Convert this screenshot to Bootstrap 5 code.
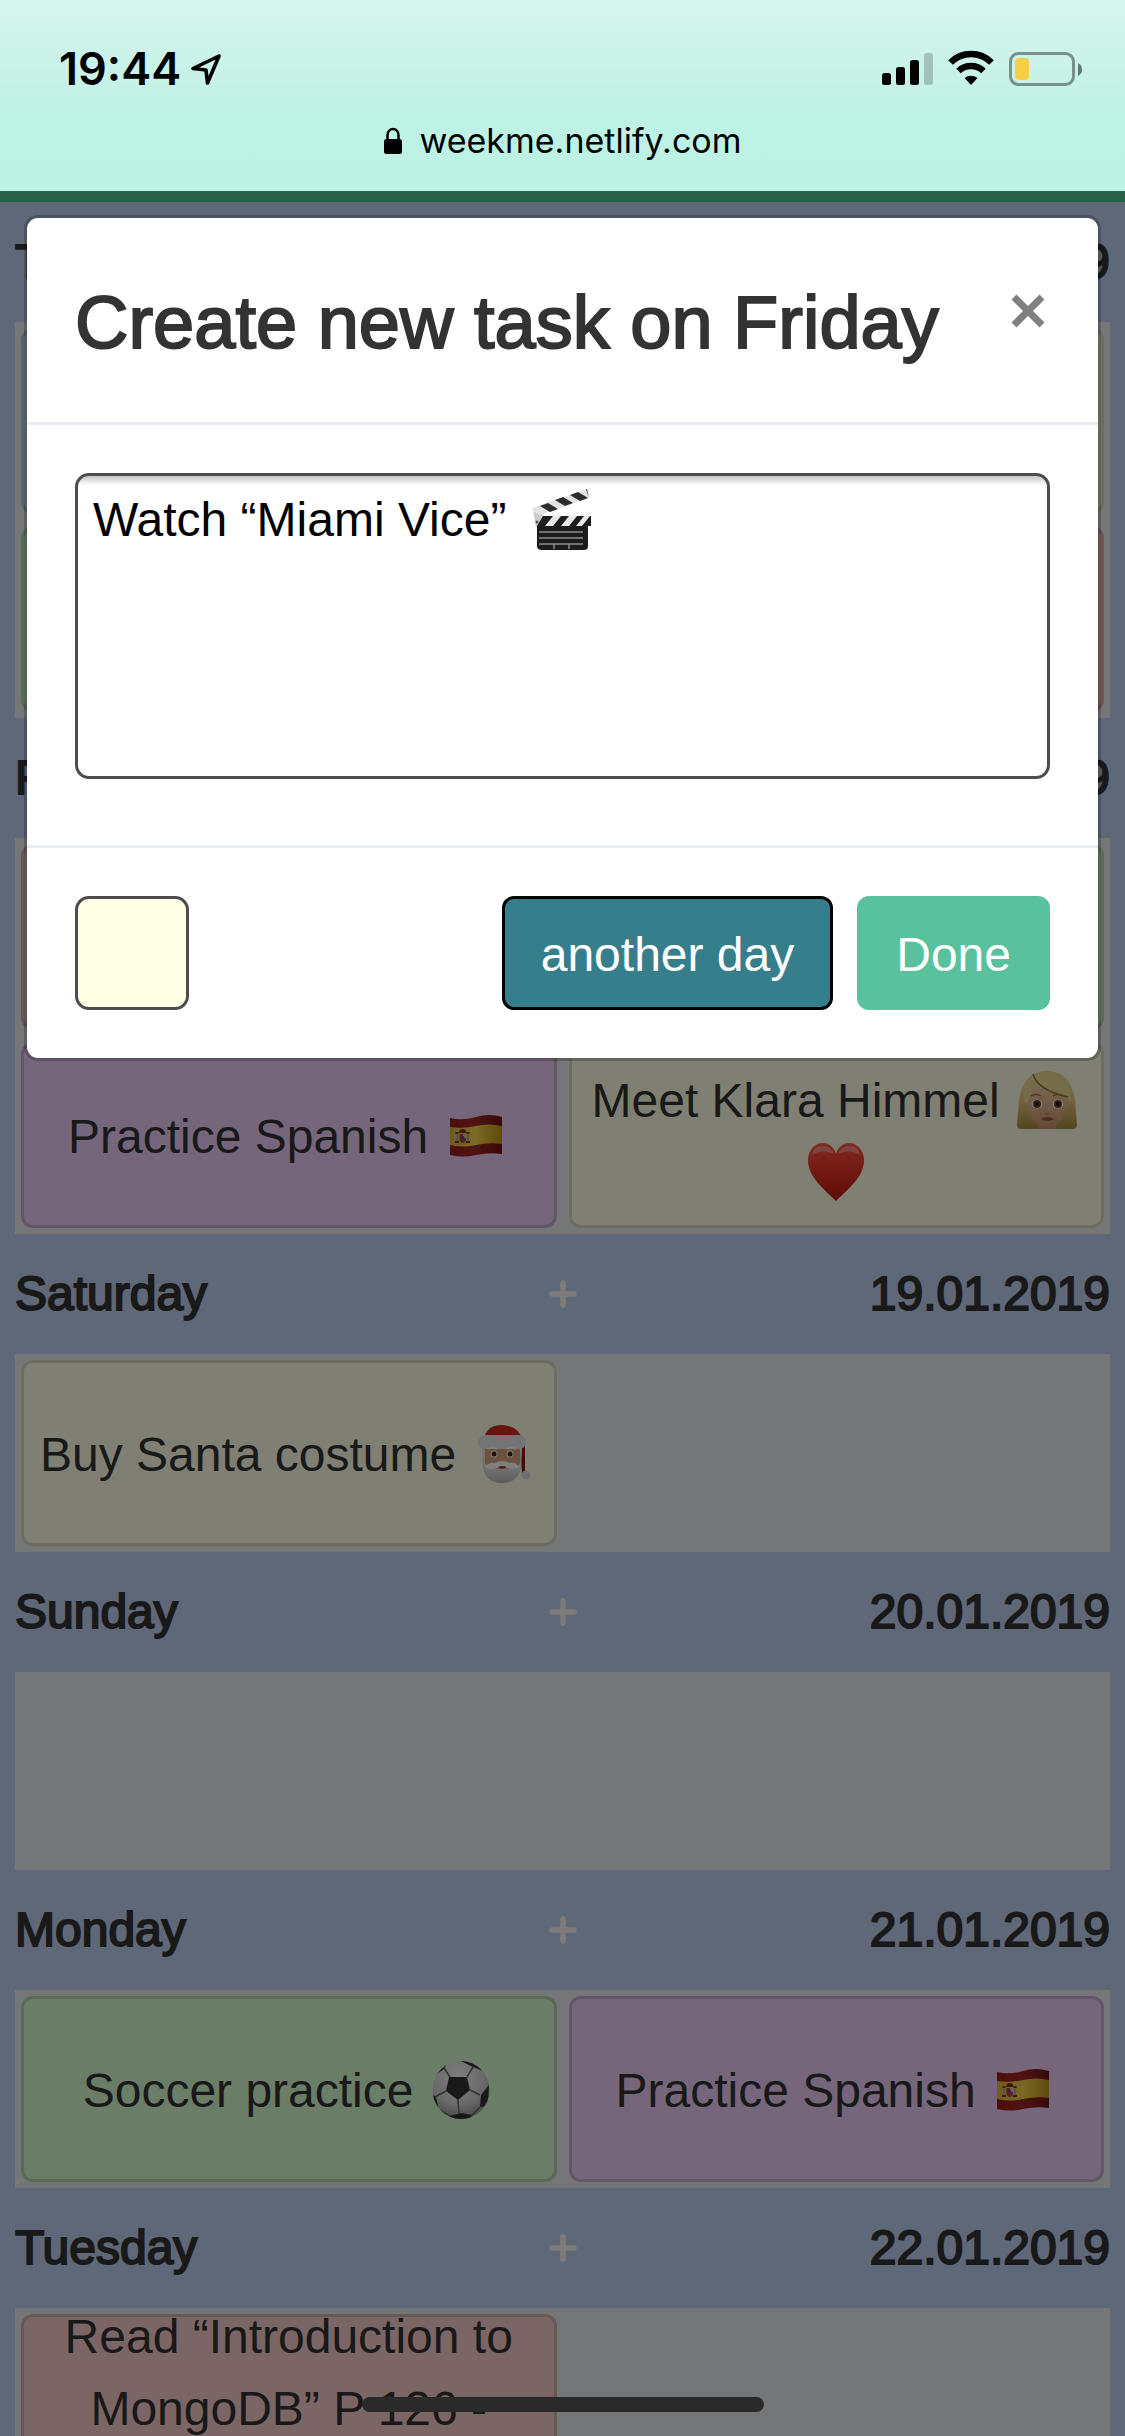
<!DOCTYPE html>
<html lang="en">
<head>
<meta charset="utf-8">
<meta name="viewport" content="width=device-width, initial-scale=1">
<title>weekme</title>
<link href="https://cdn.jsdelivr.net/npm/bootstrap@5.3.0/dist/css/bootstrap.min.css" rel="stylesheet">
<style>
  body { font-family: "Liberation Sans", Arial, sans-serif; font-size: 48px; line-height: 72px; color: #333; background: #bed0f0; }
  .top-chrome { height: 191px; background: linear-gradient(#d7f5ed 0, #c8f2e8 72px, #bef2e5 120px, #bcf1e4 100%); font-family: Inter, sans-serif; color: #000; }
  .status-line { height: 100px; padding: 38px 43px 0 59px; }
  .clock-text { font-size: 45px; font-weight: 600; line-height: 62px; }
  .address-line { font-size: 34px; line-height: 48px; padding-top: 17px; }
  .app-nav { height: 11px; background: #53be96; }
  .day-head { height: 120px; padding: 0 15px; display: grid; grid-template-columns: 1fr auto 1fr; align-items: center; }
  .day-head h2, .day-head time { font-size: 48px; font-weight: 500; line-height: 72px; margin: 0; -webkit-text-stroke: 2px #333; }
  .day-head button { border: 0; background: none; padding: 0; display: flex; }
  .task-row { margin: 0 15px; background: #eaecf0; min-height: 198px; }
  .task-card { height: 186px; margin: 6px; padding-top: 4px; border: 3px solid rgba(0, 0, 0, .15); border-radius: 12px; background-clip: border-box; }
  .tint-yellow { background-color: #ffffe6; }
  .tint-purple { background-color: #eaccf8; }
  .tint-green { background-color: #d5face; }
  .tint-red { background-color: #f8cccb; }
  .tint-blue { background-color: #cbeaf6; }
  .emo { width: 68px; height: 60px; vertical-align: -13px; }
  .dimmer { background: rgba(0, 0, 0, .5); }
  .task-modal { overflow: hidden; }
  .task-modal .modal-dialog { margin: 24px; max-width: none; }
  .task-modal .modal-content { border: 3px solid rgba(0, 0, 0, .2); border-radius: 14px; color: #333; }
  .task-modal .modal-header { padding: 51px 48px 45px; border-bottom: 3px solid #e9ecef; }
  .task-modal .modal-title { font-size: 74px; line-height: 108px; font-weight: 500; -webkit-text-stroke: 2px #333; }
  .task-modal .modal-body { padding: 48px 48px 66px; }
  .task-modal .modal-footer { padding: 48px; border-top: 3px solid #e9ecef; }
  .close-x { border: 0; background: none; padding: 0; display: flex; margin: 23px 4px 0 0; }
  .task-text { display: block; width: 100%; height: 306px; resize: none; border: 3px solid #4d4d4d; border-radius: 14px; padding: 8px 15px; color: #000; line-height: 72px; background: #fff linear-gradient(#c4c4c4, #fff) no-repeat 0 0 / 100% 9px; outline: 0; }
  .task-emoji { left: 454px; top: 15px; width: 64px; height: 64px; }
  .swatch { width: 114px; height: 114px; border: 3px solid #4d4d4d; border-radius: 14px; }
  .btn-task { font-size: 48px; line-height: 72px; padding: 20px 36px 16px; border-width: 3px; border-radius: 12px; color: #fff; }
  .btn-move { background: #377e8c; border-color: #000; }
  .btn-done { background: #5ac19e; border-color: #5ac19e; }
  .home-bar { left: 50%; bottom: 24px; width: 402px; height: 15px; margin-left: -201px; border-radius: 8px; background: #2a2a2a; z-index: 1090; }
</style>
<script src="https://cdn.jsdelivr.net/npm/bootstrap@5.3.0/dist/js/bootstrap.bundle.min.js"></script>
</head>
<body class="vh-100 d-flex flex-column overflow-hidden position-relative">

<svg width="0" height="0" class="position-absolute" aria-hidden="true">
  <defs>
    <linearGradient id="gHeart" x1="0" y1="0" x2="0" y2="1"><stop offset="0" stop-color="#ff5a4c"/><stop offset=".35" stop-color="#ee3a2c"/><stop offset="1" stop-color="#c0170c"/></linearGradient>
    <linearGradient id="gGold" x1="0" y1="0" x2="1" y2="0"><stop offset="0" stop-color="#e0b838"/><stop offset=".5" stop-color="#f4d448"/><stop offset="1" stop-color="#c09418"/></linearGradient>
    <linearGradient id="gRed" x1="0" y1="0" x2="1" y2="0"><stop offset="0" stop-color="#981c1a"/><stop offset=".45" stop-color="#a42826"/><stop offset="1" stop-color="#701010"/></linearGradient>
    <linearGradient id="gHair" x1="0" y1="0" x2="0" y2="1"><stop offset="0" stop-color="#f8e8b0"/><stop offset=".5" stop-color="#e0c67a"/><stop offset="1" stop-color="#a88c42"/></linearGradient>
    <linearGradient id="gFace" x1="0" y1="0" x2="0" y2="1"><stop offset="0" stop-color="#f2cfa4"/><stop offset="1" stop-color="#cc9870"/></linearGradient>
    <radialGradient id="gBall" cx=".45" cy=".3" r=".75"><stop offset="0" stop-color="#fff"/><stop offset=".6" stop-color="#d4d4d4"/><stop offset="1" stop-color="#888"/></radialGradient>
    <linearGradient id="gBeard" x1="0" y1="0" x2="0" y2="1"><stop offset="0" stop-color="#f4f4f4"/><stop offset="1" stop-color="#b8b8b8"/></linearGradient>
    <clipPath id="cBall"><ellipse cx="34" cy="30" rx="28.500" ry="29"/></clipPath>

    <symbol id="flag-es" viewBox="0 0 68 60">
      <path d="M8 12q13 3 26-1t26 0v37q-13-2-26 1t-26 0z" fill="url(#gRed)"/>
      <path d="M8 21q13 2 26-1t26 0v18q-13-2-26 1t-26 0z" fill="url(#gGold)"/>
      <path d="M14 28h2v8h-2zM25 28h2v8h-2z" fill="#b8a890"/><path d="M13 35h4v2h-4zM24 35h4v2h-4zM13.500 26h3v2h-3zM24.500 26h3v2h-3z" fill="#7a3a2a"/>
      <path d="M17.500 28h6.500v7q-3 4-6.500 0z" fill="#a8483c"/><path d="M21 28h3v4h-3z" fill="#d8b8c8"/><path d="M17 27q0-4 3.700-4t3.700 4z" fill="#8a2c1c"/><circle cx="20.700" cy="31.500" r="1.400" fill="#6a3c8c"/>
    </symbol>
    <symbol id="heart" viewBox="0 0 68 60">
      <path d="M34 59C22 47 6 35 6 18 6 8 13 1 21 1c6 0 11 4 13 11C36 5 41 1 47 1c8 0 15 7 15 17 0 17-16 29-28 41z" fill="url(#gHeart)"/>
      <path d="M10 13q2-9 11-9 8 0 11 8-11-6-22 1zM36 12q3-8 11-8 9 0 11 9-11-7-22-1z" fill="#fff" opacity=".35"/>
    </symbol>
    <symbol id="blonde" viewBox="0 0 68 60">
      <path d="M34 1C17 1 9 12 6 30L4 55q0 4 5 4h50q5 0 5-4l-2-25C59 12 51 1 34 1z" fill="url(#gHair)"/>
      <path d="M25 50h18v9H25z" fill="#c8906a"/>
      <path d="M14 33C14 22 22 14 34 15c12-1 20 7 20 19 0 14-10 23-20 23s-20-10-20-24z" fill="url(#gFace)"/>
      <path d="M19 5q-5 6 1 10-1 10-8 19-3-20 7-29zM20 5q8 16 34 21l4 7Q59 2 34 1q-8 0-14 4z" fill="#ecd892"/>
      <path d="M20 4q4 16 35 23" fill="none" stroke="#927837" stroke-width="1.500"/>
      <ellipse cx="24" cy="34" rx="5.500" ry="4.500" fill="#fff"/><ellipse cx="45" cy="34" rx="5.500" ry="4.500" fill="#fff"/>
      <circle cx="24" cy="34" r="4" fill="#70451c"/><circle cx="45" cy="34" r="4" fill="#70451c"/><circle cx="24" cy="34" r="2" fill="#111"/><circle cx="45" cy="34" r="2" fill="#111"/>
      <path d="M18 26q5-3 10 0M40 26q5-3 10 0" fill="none" stroke="#a07c3c" stroke-width="1.500"/>
      <path d="M32 43q2 2 5 0" fill="none" stroke="#b07850" stroke-width="1.500"/><path d="M28 49q7-4 13 0-7 4-13 0z" fill="#aa4e48"/>
    </symbol>
    <symbol id="santa" viewBox="0 0 68 60">
      <path d="M50 20h5v29h-3z" fill="#8c1414"/><circle cx="56" cy="51" r="4.500" fill="#ddd"/>
      <path d="M12 22q0 16 2 25 4 12 18 12t18-12q2-9 2-25z" fill="url(#gBeard)"/>
      <path d="M15 20h35v22q-3 4-17 4t-18-4z" fill="#d9a47a"/>
      <path d="M14 17Q15 1 32 1q18 1 21 17z" fill="#d12a20"/>
      <rect x="8" y="11" width="48" height="14" rx="7" fill="#e8e8e8"/>
      <path d="M14 38q5 8 18 7 14 1 19-7 0 20-19 21-18-1-18-21z" fill="url(#gBeard)"/>
      <path d="M15 43q4-5 10-4 7-4 15 0 6-1 9 4-8 4-13 0-3-2-7 0-7 4-14 0z" fill="#fff"/>
      <circle cx="24" cy="30" r="3.500" fill="#fff"/><circle cx="40" cy="30" r="3.500" fill="#fff"/><circle cx="24" cy="30" r="2.500" fill="#3a1d0c"/><circle cx="40" cy="30" r="2.500" fill="#3a1d0c"/>
      <path d="M18 25q5-3 9 0M37 25q5-3 9 0" stroke="#fff" stroke-width="2" fill="none"/><path d="M28 43q4-2 8 0-4 3-8 0z" fill="#8a3e2e"/>
    </symbol>
    <symbol id="soccer" viewBox="0 0 68 60">
      <ellipse cx="34" cy="30" rx="28.500" ry="29" fill="url(#gBall)"/>
      <g clip-path="url(#cBall)" fill="#333">
        <path d="M22 17h18l3 13-12 10-12-9zM30-1l14 1 12 11-10-4zM62 25l-8 10-1 12 8-1zM22 56l12-3 11 2-3 7H24zM4 34l5 3 3 14-7-5zM7 16l10-7 4-7-9 3z"/>
        <path d="M23 17l-6-9M40 17l6-10M43 30l10 5M31 40l1 14M19 31L8 37M53 47l-9 9M12 50l11 6M22 2l10-3" stroke="#666" stroke-width="1.500"/>
      </g>
    </symbol>
    <symbol id="clapper" viewBox="0 0 64 64">
      <path d="M4 21l3-1 17 17-17 2z" fill="#ccc"/><circle cx="8" cy="34" r="1.500" fill="#555"/><circle cx="17" cy="34" r="1.500" fill="#555"/>
      <path d="M3 20L58 1l2 9L11 27q-6-2-8-7z" fill="#e2e2e2"/>
      <path d="M11 18l8-3 10 6-8 3zM26 12l8-3 10 6-8 3zM41 7l8-3 10 6-8 3zM57 1h1l2 9z" fill="#2c2c2c"/>
      <path d="M14 28h48v10H8z" fill="#1d1d1d"/>
      <path d="M24 28h8l-8 10h-8zM40 28h8l-8 10h-8zM55 28h6l-8 10h-6z" fill="#e8ece8"/>
      <path d="M8 38h51v20q0 4-4 4H13q-5 0-5-4z" fill="#1c1c1c"/>
      <path d="M10 44h44M10 50h44M10 56h44M25 56v5M40 56v5" stroke="#8c8c8c" stroke-width="1.500"/>
    </symbol>
    <symbol id="plus" viewBox="0 0 28 28"><path d="M14 3v22M3 14h22" stroke="#fbf8f3" stroke-width="5.500" stroke-linecap="round"/></symbol>
  </defs>
</svg>

<header class="top-chrome flex-shrink-0">
  <div class="status-line d-flex justify-content-between align-items-start">
    <div class="d-flex align-items-center gap-2">
      <span class="clock-text">19:44</span>
      <svg width="34" height="34" viewBox="0 0 34 34" aria-label="Location"><path d="M30 4L4 16.500 17 18l1.500 13z" fill="none" stroke="#000" stroke-width="3.600" stroke-linejoin="round"/></svg>
    </div>
    <svg width="202" height="42" viewBox="0 -3 202 42" class="mt-2" aria-label="Signal, Wi-Fi, battery">
      <rect x="2" y="24" width="9" height="12" rx="2.500"/><rect x="16" y="18" width="9" height="18" rx="2.500"/><rect x="30" y="11" width="9" height="25" rx="2.500"/><rect x="44" y="4" width="9" height="32" rx="2.500" opacity=".2"/>
      <path d="M70.500 13.500a29 29 0 0 1 41 0" fill="none" stroke="#000" stroke-width="6.500"/>
      <path d="M78.500 22a18 18 0 0 1 25 0" fill="none" stroke="#000" stroke-width="6.500"/>
      <path d="M84.500 29a10 9 0 0 1 13 0L91 36z"/>
      <rect x="130.500" y="4.500" width="63" height="31" rx="8" fill="none" stroke="#000" stroke-opacity=".4" stroke-width="3"/>
      <rect x="135" y="9" width="14" height="22" rx="4" fill="#f7ce46"/>
      <path d="M198 14q4 2 4 6.500t-4 6.500z" opacity=".5"/>
    </svg>
  </div>
  <div class="address-line d-flex justify-content-center align-items-center">
    <svg width="20" height="28" viewBox="0 0 20 28" class="me-3" aria-label="Secure"><rect x="1" y="12" width="18" height="15" rx="2.500"/><path d="M4.500 13V8a5.500 6 0 0 1 11 0v5" fill="none" stroke="#000" stroke-width="2.500"/></svg>
    <span>weekme.netlify.com</span>
  </div>
</header>

<div class="position-relative flex-grow-1 overflow-hidden">
  <nav class="app-nav"></nav>
  <main>
    <section>
      <div class="day-head"><h2>Thursday</h2><button type="button" aria-label="Add task on Thursday"><svg width="28" height="28"><use href="#plus"/></svg></button><time class="text-end">17.01.2019</time></div>
      <div class="task-row row g-0">
        <div class="col-6"><div class="task-card tint-blue"></div></div><div class="col-6"><div class="task-card tint-yellow"></div></div>
        <div class="col-6"><div class="task-card tint-green"></div></div><div class="col-6"><div class="task-card tint-red"></div></div>
      </div>
    </section>
    <section>
      <div class="day-head"><h2>Friday</h2><button type="button" aria-label="Add task on Friday"><svg width="28" height="28"><use href="#plus"/></svg></button><time class="text-end">18.01.2019</time></div>
      <div class="task-row row g-0">
        <div class="col-6"><div class="task-card tint-red"></div></div><div class="col-6"><div class="task-card tint-green"></div></div>
        <div class="col-6"><div class="task-card tint-purple d-flex align-items-center justify-content-center text-center"><div>Practice Spanish <svg class="emo" role="img" aria-label="Flag of Spain"><use href="#flag-es"/></svg></div></div></div>
        <div class="col-6"><div class="task-card tint-yellow d-flex align-items-center justify-content-center text-center"><div>Meet Klara Himmel <svg class="emo" role="img" aria-label="Woman"><use href="#blonde"/></svg><br><svg class="emo" role="img" aria-label="Heart"><use href="#heart"/></svg></div></div></div>
      </div>
    </section>
    <section>
      <div class="day-head"><h2>Saturday</h2><button type="button" aria-label="Add task on Saturday"><svg width="28" height="28"><use href="#plus"/></svg></button><time class="text-end">19.01.2019</time></div>
      <div class="task-row row g-0">
        <div class="col-6"><div class="task-card tint-yellow d-flex align-items-center justify-content-center text-center"><div>Buy Santa costume <svg class="emo" role="img" aria-label="Santa"><use href="#santa"/></svg></div></div></div>
      </div>
    </section>
    <section>
      <div class="day-head"><h2>Sunday</h2><button type="button" aria-label="Add task on Sunday"><svg width="28" height="28"><use href="#plus"/></svg></button><time class="text-end">20.01.2019</time></div>
      <div class="task-row row g-0"></div>
    </section>
    <section>
      <div class="day-head"><h2>Monday</h2><button type="button" aria-label="Add task on Monday"><svg width="28" height="28"><use href="#plus"/></svg></button><time class="text-end">21.01.2019</time></div>
      <div class="task-row row g-0">
        <div class="col-6"><div class="task-card tint-green d-flex align-items-center justify-content-center text-center"><div>Soccer practice <svg class="emo" role="img" aria-label="Soccer ball"><use href="#soccer"/></svg></div></div></div>
        <div class="col-6"><div class="task-card tint-purple d-flex align-items-center justify-content-center text-center"><div>Practice Spanish <svg class="emo" role="img" aria-label="Flag of Spain"><use href="#flag-es"/></svg></div></div></div>
      </div>
    </section>
    <section>
      <div class="day-head"><h2>Tuesday</h2><button type="button" aria-label="Add task on Tuesday"><svg width="28" height="28"><use href="#plus"/></svg></button><time class="text-end">22.01.2019</time></div>
      <div class="task-row row g-0">
        <div class="col-6"><div class="task-card tint-red d-flex align-items-center justify-content-center text-center"><div>Read “Introduction to<br>MongoDB” P 126 -<br><br></div></div></div>
      </div>
    </section>
  </main>

  <div class="dimmer position-absolute top-0 start-0 w-100 h-100"></div>
  <div class="modal task-modal d-block position-absolute" tabindex="-1" role="dialog" aria-labelledby="taskTitle">
    <div class="modal-dialog">
      <form class="modal-content">
        <div class="modal-header align-items-start">
          <h1 class="modal-title" id="taskTitle">Create new task on Friday</h1>
          <button type="button" class="close-x" aria-label="Close"><svg width="36" height="38" viewBox="0 0 36 38"><path d="M4 5l28 28M32 5L4 33" stroke="#808080" stroke-width="7"/></svg></button>
        </div>
        <div class="modal-body">
          <div class="position-relative">
            <textarea class="task-text" aria-label="Task">Watch “Miami Vice”</textarea>
            <svg class="task-emoji position-absolute" role="img" aria-label="Clapper board"><use href="#clapper"/></svg>
          </div>
        </div>
        <div class="modal-footer d-flex justify-content-between">
          <button type="button" class="swatch tint-yellow m-0" aria-label="Task colour"></button>
          <div class="d-flex gap-4 m-0">
            <button type="button" class="btn btn-task btn-move">another day</button>
            <button type="submit" class="btn btn-task btn-done">Done</button>
          </div>
        </div>
      </form>
    </div>
  </div>
</div>
<div class="home-bar position-absolute"></div>
</body>
</html>
